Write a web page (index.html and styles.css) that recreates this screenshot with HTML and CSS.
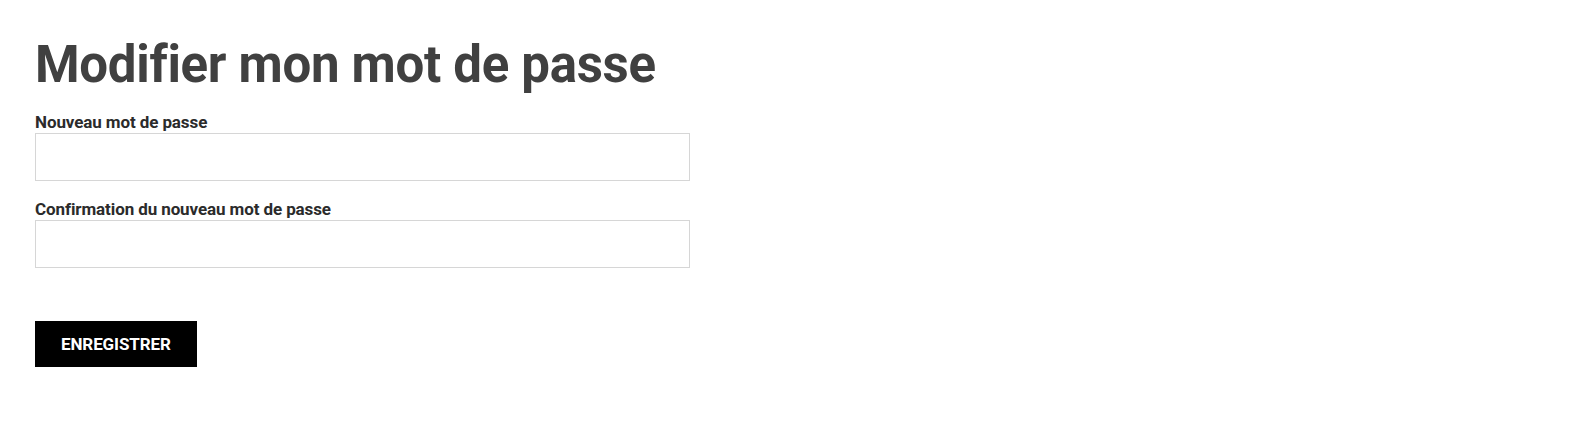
FILE: index.html
```html
<!DOCTYPE html>
<html>
	<head>
		<meta charset="utf-8" />
		<title>Modifier mon mot de passe</title>
		<link rel="stylesheet" href="styles.css">
	</head>
	<body>
		<div class="page">
			<h1>Modifier mon mot de passe</h1>
			<form class="password-form">
				<div class="field">
					<label for="new-password">Nouveau mot de passe</label>
					<input type="password" id="new-password" />
				</div>
				<div class="field">
					<label for="confirm-password">Confirmation du nouveau mot de passe</label>
					<input type="password" id="confirm-password" />
				</div>
				<div class="actions">
					<button type="submit" class="btn">Enregistrer</button>
				</div>
			</form>
		</div>
	</body>
</html>
```

FILE: styles.css
```css
body {
	margin: 0;
	font-family: Roboto, "Liberation Sans", Arial, sans-serif;
	color: #333;
	background: #fff;
}

.page {
	padding: 34px 35px 0 35px;
}

h1 {
	font-size: 51px;
	font-weight: 700;
	line-height: 61px;
	letter-spacing: -0.3px;
	color: #404040;
	margin: 0 0 17px 0;
}

/* form */

.password-form {
	width: 655px;
}

.field {
	margin-bottom: 18px;
}

.field label {
	display: block;
	font-size: 17px;
	font-weight: 700;
	line-height: 21px;
	letter-spacing: -0.1px;
	color: #2b2b2b;
}

.field input {
	display: block;
	box-sizing: border-box;
	width: 100%;
	height: 48px;
	border: 1px solid #d6d6d6;
	border-radius: 0;
	padding: 0 12px;
	font-family: inherit;
	font-size: 15px;
	background: #fff;
}

.actions {
	padding-top: 35px;
}

.btn {
	background: #000;
	color: #fff;
	border: 0;
	border-radius: 0;
	height: 46px;
	padding: 0 26px;
	font-family: inherit;
	font-size: 17px;
	font-weight: 700;
	letter-spacing: -0.1px;
	text-transform: uppercase;
	cursor: pointer;
}
```
